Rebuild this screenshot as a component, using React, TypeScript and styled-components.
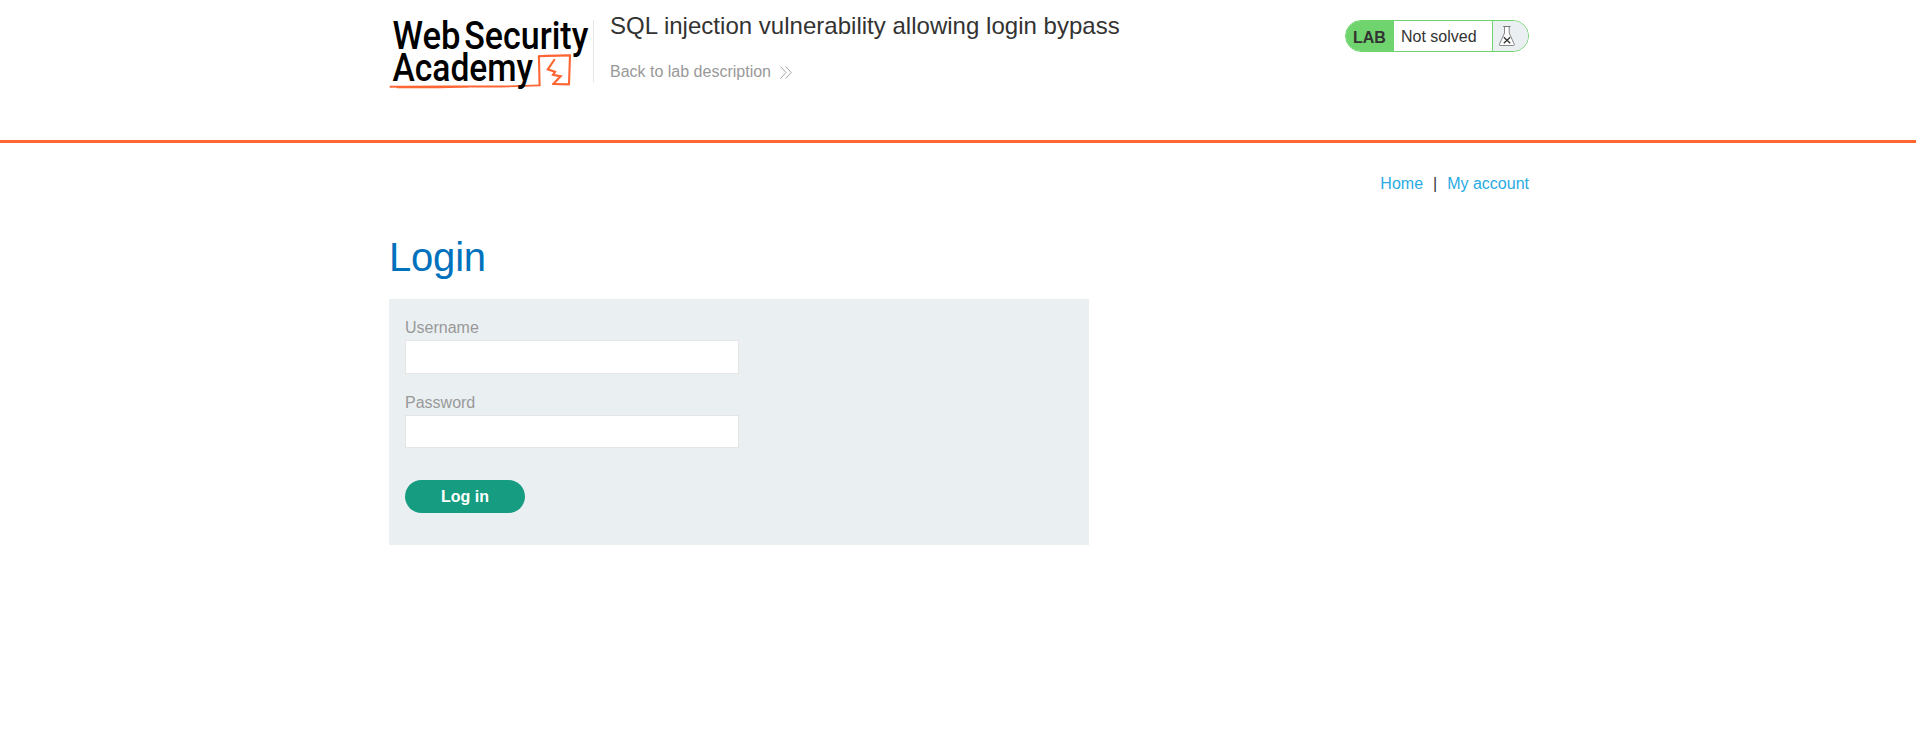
import React from 'react';
import styled, { createGlobalStyle } from 'styled-components';

const GlobalStyle = createGlobalStyle`
  * { box-sizing: border-box; }
  body {
    margin: 0;
    background: #fff;
    color: #333332;
    font-family: "Liberation Sans", Arial, sans-serif;
    font-size: 16px;
    line-height: 24px;
  }
`;

const Container = styled.div`
  width: 1140px;
  margin-left: calc(50% - 569px);
`;

const Header = styled.header`
  height: 143px;
  border-bottom: 3px solid #ff6633;
`;

const HeaderRow = styled(Container)`
  display: flex;
  align-items: flex-start;
`;

const Logo = styled.svg`
  display: block;
  width: 204px;
  height: 100px;
  flex: none;
  overflow: visible;
`;

const TitleBlock = styled.div`
  flex: 1;
  margin-top: 20px;
  height: 62px;
  padding-left: 16px;
  border-left: 1px solid #e5e5e5;
`;

const Title = styled.h2`
  margin: -10px 0 0;
  font-size: 24px;
  font-weight: 400;
  line-height: 32px;
  letter-spacing: 0.02px;
`;

const BackLink = styled.a`
  display: flex;
  align-items: center;
  gap: 9px;
  margin-top: 18px;
  color: #999;
  text-decoration: none;
`;

const Status = styled.div`
  display: flex;
  width: 184px;
  height: 32px;
  margin-top: 20px;
  border: 1px solid #6fd36e;
  border-radius: 16px;
  overflow: hidden;
  line-height: 30px;
`;

const StatusTag = styled.span`
  width: 48px;
  padding: 2px 0 0 7px;
  background: #6fd36e;
  font-weight: 700;
`;

const StatusText = styled.span`
  width: 98px;
  padding: 1px 0 0 7px;
`;

const StatusIcon = styled.span`
  display: flex;
  flex: 1;
  padding: 4px 0 0 5px;
  border-left: 1px solid #6fd36e;
  background: #eaeff2;
`;

const Nav = styled.nav`
  display: flex;
  justify-content: flex-end;
  gap: 10px;
  padding-top: 29px;
`;

const NavLink = styled.a`
  color: #29abe2;
  text-decoration: none;
`;

const PageTitle = styled.h1`
  margin: 37px 0 18px;
  color: #0071bc;
  font-size: 40px;
  font-weight: 400;
  line-height: 48px;
  letter-spacing: -0.2px;
`;

const LoginForm = styled.form`
  width: 700px;
  height: 246px;
  padding: 17px 16px;
  background: #eaeff2;
`;

const Label = styled.label`
  display: block;
  height: 24px;
  color: #999;
`;

const Input = styled.input<{ $height: number; $gap: number }>`
  display: block;
  width: 334px;
  height: ${(p) => p.$height}px;
  margin: 0 0 ${(p) => p.$gap}px;
  padding: 4px 8px;
  border: 1px solid #e5e5e5;
  border-radius: 0;
  background: #fff;
  font: inherit;
  outline: none;
`;

const LoginButton = styled.button`
  display: block;
  width: 120px;
  height: 33px;
  padding: 0;
  border: 0;
  border-radius: 17px;
  background: #169c80;
  color: #fff;
  font: 700 16px/33px "Liberation Sans", Arial, sans-serif;
`;

const AcademyLogo = () => (
  <Logo viewBox="389 0 204 100" role="img" aria-label="Web Security Academy">
    <g fill="none" stroke="#ff6633" strokeLinecap="round" strokeLinejoin="round">
      <path d="M390.5 86.8Q440 86.2 476 86.5T539.5 85.4" strokeWidth="1.9" />
      <path d="M397 87.6Q430 88 468 86.8" strokeWidth="1.2" />
      <path d="M539.6 85.2L538.9 56.2L570 55.2L569 84.4L553 84" strokeWidth="2.1" />
      <path d="M538.6 56.3L545 55.6L570.3 55.5" strokeWidth="1.7" />
      <path d="M554.2 60L547.8 69.4L555 71.8L553 74.8L560.6 76.3L553.6 83.8" strokeWidth="2.2" strokeLinejoin="miter" />
    </g>
    <g fill="#000" fontFamily='Roboto, "Liberation Sans", sans-serif' fontWeight="500" fontSize="38.4">
      <text x="392.5" y="48.7" textLength="68" lengthAdjust="spacingAndGlyphs">Web</text>
      <text x="464.3" y="48.7" textLength="124" lengthAdjust="spacingAndGlyphs">Security</text>
      <text x="392.5" y="81" textLength="140.5" lengthAdjust="spacingAndGlyphs">Academy</text>
    </g>
  </Logo>
);

const DoubleChevron = () => (
  <svg width="12" height="13" viewBox="0 0 12 13" fill="none" stroke="#999" strokeWidth="0.9">
    <path d="M0.5 0.5L6 6.5L0.5 12.5M5.7 0.5L11.2 6.5L5.7 12.5" />
  </svg>
);

const Flask = () => (
  <svg width="18" height="22" viewBox="0 0 18 22" fill="none">
    <path d="M6.5 1.5V8L1.5 19.2Q1 20.5 2 20.5H15.5Q16.8 20.5 16.2 19.2L11.2 8V1.5" fill="#fff" stroke="#888" />
    <path d="M5.2 1.5H12.5" stroke="#777" />
    <path d="M5.8 12.3L12.2 18.3M12.2 12.3L5.8 18.3" stroke="#333332" strokeWidth="1.3" />
  </svg>
);

export default function App() {
  return (
    <>
      <GlobalStyle />
      <Header>
        <HeaderRow>
          <AcademyLogo />
          <TitleBlock>
            <Title>SQL injection vulnerability allowing login bypass</Title>
            <BackLink>Back to lab description<DoubleChevron /></BackLink>
          </TitleBlock>
          <Status>
            <StatusTag>LAB</StatusTag>
            <StatusText>Not solved</StatusText>
            <StatusIcon><Flask /></StatusIcon>
          </Status>
        </HeaderRow>
      </Header>
      <Container as="main">
        <Nav>
          <NavLink>Home</NavLink>
          <span>|</span>
          <NavLink>My account</NavLink>
        </Nav>
        <PageTitle>Login</PageTitle>
        <LoginForm>
          <Label htmlFor="username">Username</Label>
          <Input id="username" $height={34} $gap={17} />
          <Label htmlFor="password">Password</Label>
          <Input id="password" type="password" $height={33} $gap={32} />
          <LoginButton type="button">Log in</LoginButton>
        </LoginForm>
      </Container>
    </>
  );
}
